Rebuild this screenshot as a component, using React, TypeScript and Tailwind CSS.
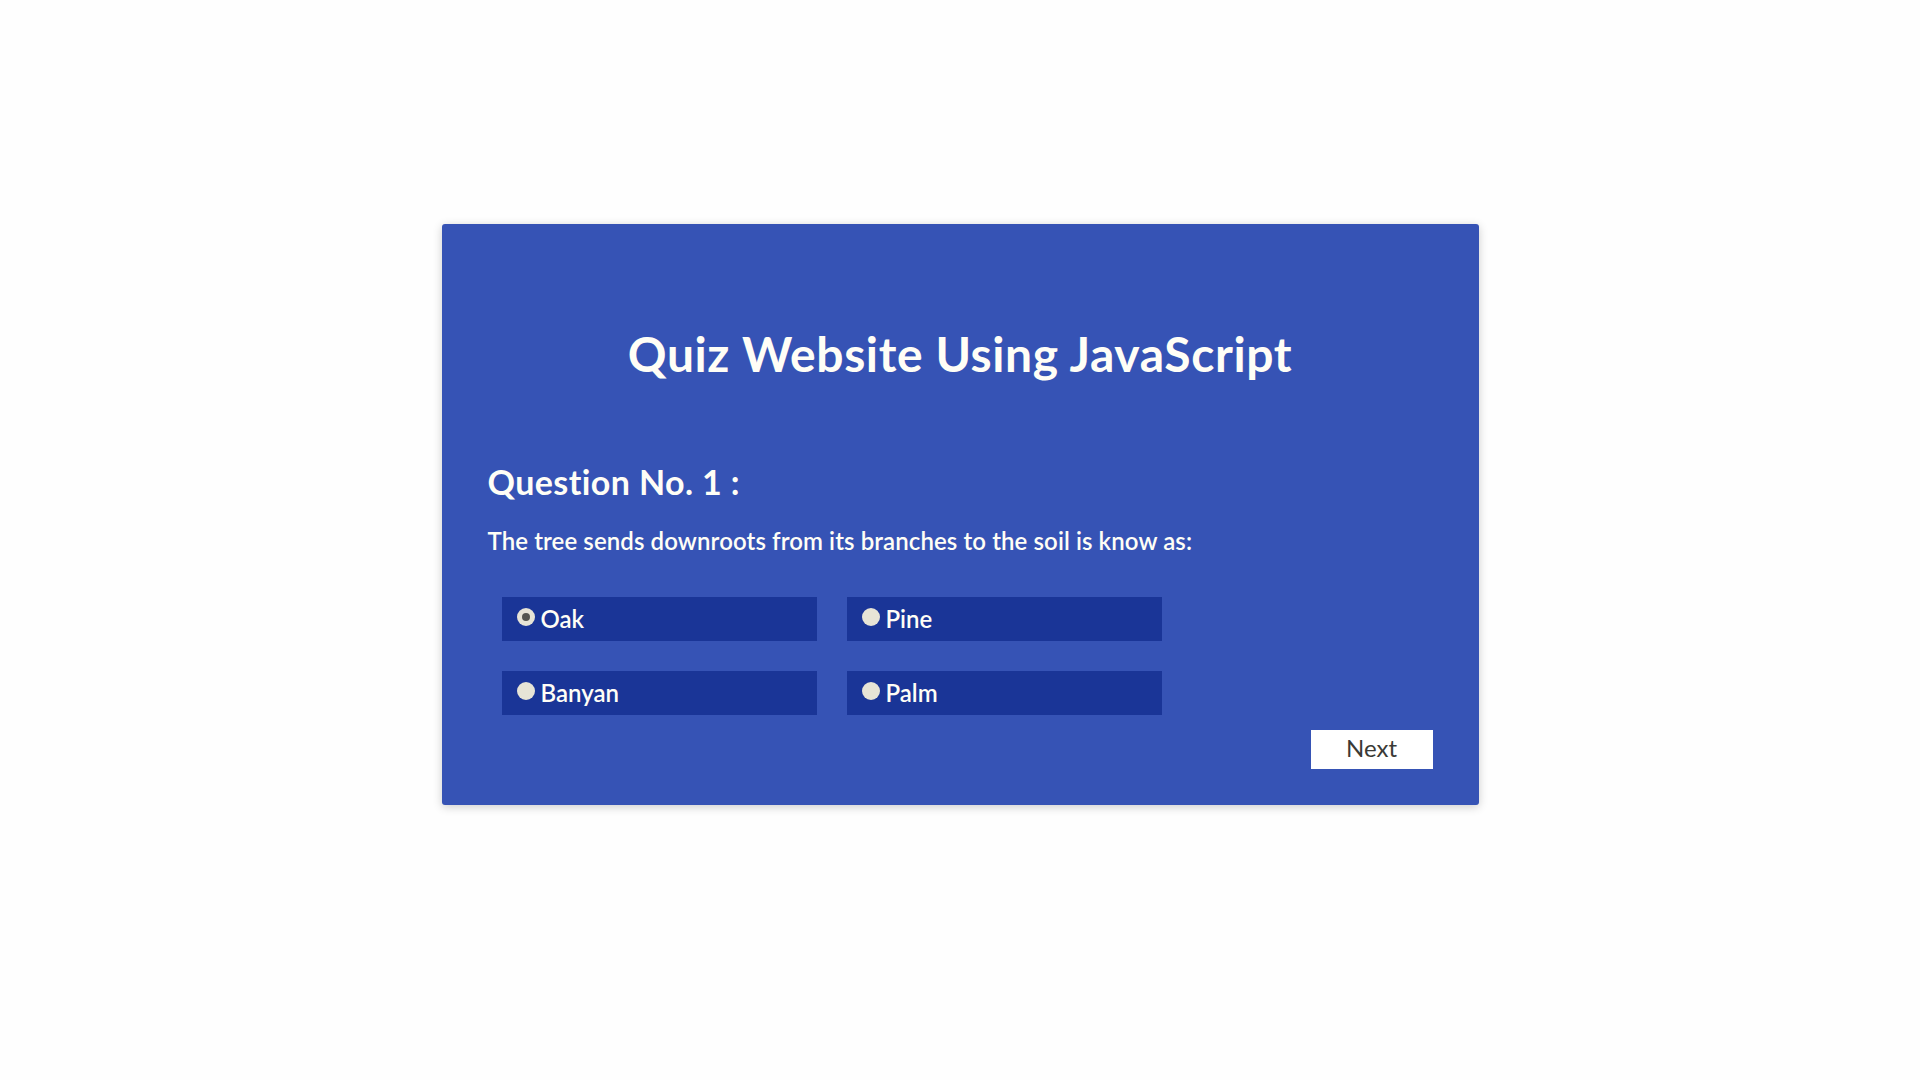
import React from "react";

const options = [
  { label: "Oak", checked: true },
  { label: "Pine", checked: false },
  { label: "Banyan", checked: false },
  { label: "Palm", checked: false },
];

export default function App() {
  return (
    <div
      className="min-h-screen w-full bg-[#fefefe] pt-[224px]"
      style={{ fontFamily: "Lato, 'Open Sans', sans-serif" }}
    >
      <div className="mx-auto flex w-[1037px] flex-col rounded-[3px] bg-[#3653b5] px-[46px] pb-[36px] pt-[106px] text-[#fffef6] shadow-[0_2px_10px_rgba(0,0,0,0.2)]">
        <h1 className="text-center text-[48px] font-bold leading-none tracking-[0.6px]">
          Quiz Website Using JavaScript
        </h1>
        <h2 className="mt-[87px] text-[34px] font-bold leading-none tracking-[0.4px]">
          Question No. 1 :
        </h2>
        <p className="mt-[30px] text-[24px] font-semibold leading-none tracking-[0.1px]">
          The tree sends downroots from its branches to the soil is know as:
        </p>
        <div className="ml-[14px] mt-[44px] grid grid-cols-[315px_315px] gap-x-[30px] gap-y-[30px]">
          {options.map((o) => (
            <label
              key={o.label}
              className="flex h-[44px] items-center bg-[#1a3597] pl-[15px]"
            >
              <span className="mb-[5px] flex h-[18px] w-[18px] items-center justify-center rounded-full bg-[#e7e4d6]">
                {o.checked && (
                  <span className="h-[8px] w-[8px] rounded-full bg-[#55554f]" />
                )}
              </span>
              <span className="ml-[6px] text-[24px] font-semibold leading-none">
                {o.label}
              </span>
            </label>
          ))}
        </div>
        <div className="mt-[15px] flex justify-end">
          <button className="h-[39px] w-[122px] bg-white pb-[3px] text-[24px] leading-none text-[#3a3a36]">
            Next
          </button>
        </div>
      </div>
    </div>
  );
}
